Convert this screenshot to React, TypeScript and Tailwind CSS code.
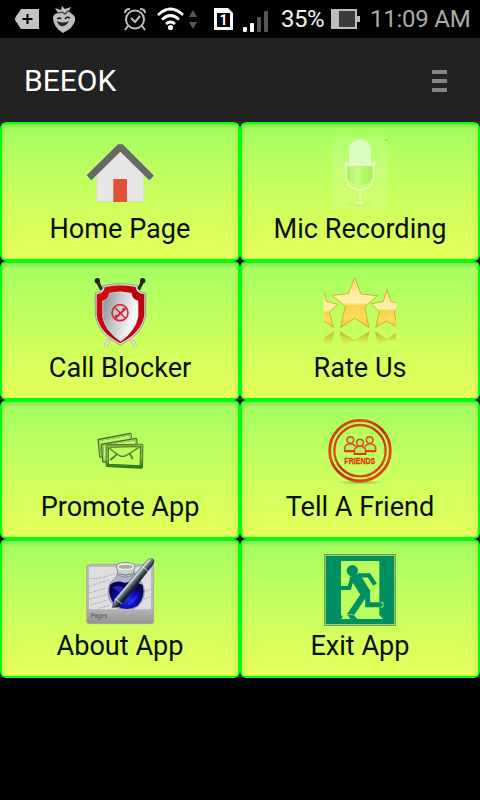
import type { ReactNode } from 'react';

function HomeIcon() {
  return (
    <svg className="block size-[72px]" viewBox="42 21 216 216">
      <path d="M80 215V128L151 62l70 66v87z" fill="#e6e6e4" stroke="#cfe0b0" strokeWidth="2" />
      <path d="M50 136L144 43h14l94 94-14 14-87-86-87 86z" fill="#686868" />
      <path d="M130 147h41v69h-41z" fill="#df5035" />
    </svg>
  );
}

function MicIcon() {
  return (
    <svg className="block size-[72px]" viewBox="42 21 216 216">
      <defs>
        <linearGradient id="micBack" x1="0" y1="0" x2="0" y2="1">
          <stop offset="0" stopColor="#fff" stopOpacity=".09" />
          <stop offset=".5" stopColor="#fff" stopOpacity=".15" />
          <stop offset="1" stopColor="#fff" stopOpacity=".09" />
        </linearGradient>
        <pattern id="mesh" width="6" height="6" patternUnits="userSpaceOnUse">
          <rect width="6" height="6" fill="#e1ffc9" />
          <circle cx="1.5" cy="1.5" r="1.1" fill="#b5f77c" />
          <circle cx="4.5" cy="4.5" r="1.1" fill="#b5f77c" />
        </pattern>
        <linearGradient id="micBody">
          <stop offset="0" stopColor="#a2f65b" />
          <stop offset=".4" stopColor="#cdfc8d" />
          <stop offset=".6" stopColor="#b2f967" />
          <stop offset="1" stopColor="#a6f55c" />
        </linearGradient>
      </defs>
      <rect x="66" y="22" width="168" height="213" fill="url(#micBack)" />
      <ellipse cx="149" cy="224" rx="40" ry="7" fill="#c4f26a" opacity=".35" />
      <path d="M117 98V60q2-30 33-32 31 2 33 32v38z" fill="url(#mesh)" />
      <path d="M112 106h76v33q-4 24-38 28-34-4-38-28z" fill="url(#micBody)" />
      <path d="M107 108v30q3 39 43 42 38-3 41-42v-30M151 180v38" fill="none" stroke="#e6ffb9" strokeWidth="5" />
      <path d="M103 96h9v3h77v-3h9v11H103z" fill="#edffcf" />
      <rect x="136" y="216" width="26" height="6" rx="3" fill="#e6ffb9" />
      <path d="M221 28l12 1v5l-6-3z" fill="#8bc862" />
    </svg>
  );
}

function ShieldIcon() {
  return (
    <svg className="block size-[72px]" viewBox="42 18 216 216">
      <defs>
        <linearGradient id="steel" x1="0" y1="0" x2="1" y2=".35">
          <stop offset="0" stopColor="#858a91" />
          <stop offset=".5" stopColor="#c9cbd0" />
          <stop offset="1" stopColor="#fff" />
        </linearGradient>
        <linearGradient id="shieldRed" x1="0" y1="0" x2="1" y2="1">
          <stop offset="0" stopColor="#d9131f" />
          <stop offset=".5" stopColor="#b5000c" />
          <stop offset="1" stopColor="#cb0a16" />
        </linearGradient>
      </defs>
      <path d="M118 208l-13 22M184 208l13 22" stroke="#a3a998" strokeWidth="9" />
      <path d="M118 208l-13 22M184 208l13 22" stroke="#f0f3e6" strokeWidth="5" />
      <path d="M82 34l13 25M218 34l-13 25" stroke="#263022" strokeWidth="10" />
      <circle cx="82" cy="32" r="8" fill="#192119" /><circle cx="218" cy="32" r="8" fill="#192119" />
      <path d="M100 47q51-12 101 0 2 21 26 22v68q-9 57-76 88-67-32-75-88V69q22-1 24-22z" fill="#e3e4df" stroke="#737a70" strokeWidth="2" />
      <path d="M104 51q47-10 93 0 2 20 26 22v63q-8 52-72 84-64-33-71-84V73q22-3 24-22z" fill="url(#shieldRed)" />
      <path d="M118 70q33-9 66 0 1 18 20 23v48q-9 42-52 73-46-31-54-73V93q19-4 20-23z" fill="url(#steel)" stroke="#e9e9e9" strokeWidth="2" />
      <circle cx="150" cy="128" r="24" fill="none" stroke="#d82330" strokeWidth="5" />
      <path d="M132 110l36 36" stroke="#d82330" strokeWidth="4" />
      <path d="M135 144q-3-11 6-9l16-14q-2-10 9-7l2 5-7 6-24 23z" fill="#d82330" />
    </svg>
  );
}

const STAR = 'M134 23l19 49 49 5-38 33 13 63-43-29-42 29 14-64-40-33 49-5z';

function StarsIcon() {
  return (
    <svg className="block size-[72px]" viewBox="42 18 216 216">
      <defs>
        <linearGradient id="gold" x1="0" y1="0" x2="0" y2="1">
          <stop offset="0" stopColor="#fbdc60" />
          <stop offset=".3" stopColor="#ffeb9a" />
          <stop offset=".5" stopColor="#fff1ac" />
          <stop offset=".56" stopColor="#fad34b" />
          <stop offset=".8" stopColor="#ffdf5c" />
          <stop offset="1" stopColor="#f2c237" />
        </linearGradient>
        <linearGradient id="fade" gradientUnits="userSpaceOnUse" x1="0" y1="185" x2="0" y2="234">
          <stop offset="0" stopColor="#b5ab28" stopOpacity=".85" />
          <stop offset=".45" stopColor="#cdd442" stopOpacity=".7" />
          <stop offset="1" stopColor="#d9ff5b" stopOpacity="0" />
        </linearGradient>
      </defs>
      <g fill="url(#gold)" stroke="#d2a02c" strokeWidth="2.5" strokeLinejoin="round">
        <path d="M10 94l23-2 9-26 8 28 33 9-25 23 12 46-28-19-29 19z" />
        <path d="M231 59l12 36 35 7-26 23 10 47-31-19-34 19 11-47-24-24 35-6z" />
        <path d={STAR} />
      </g>
      <path d="M42 205l30-20-9 43-21-9zM89 184l45 28 45-28-9 44-36-16-36 16zM195 184l36 25 27-20v22l-27-2-26 17z" fill="url(#fade)" />
      <path d="M42 205l30-20M89 184l45 28 45-28M195 184l36 25 27-20" fill="none" stroke="#aeb03f" strokeWidth="2" opacity=".6" />
    </svg>
  );
}

function MailIcon() {
  return (
    <svg className="block size-[72px]" viewBox="42 15 216 216">
      <defs>
        <linearGradient id="mail" x1="0" y1="0" x2="0" y2="1">
          <stop offset="0" stopColor="#86ad42" />
          <stop offset=".6" stopColor="#82c144" />
          <stop offset="1" stopColor="#21841e" />
        </linearGradient>
      </defs>
      <g fill="none" strokeLinejoin="round">
        <path d="M98 140h-7l-5-50 95-18 2 12M107 155h-7l-4-51 102-17 2 14" stroke="#48682f" strokeWidth="7" />
        <path d="M97 138h-5l-4-46 93-18 1 10M106 153h-4l-4-47 99-17 1 11" stroke="#a9d569" strokeWidth="3.5" />
        <path d="M112 108l103-2-1 65-102-5z" stroke="#385d26" strokeWidth="10" />
        <path d="M112 108l103-2-1 65-102-5z" stroke="url(#mail)" strokeWidth="6" />
        <path d="M115 111q25 23 37 27 9 2 17-2l41-26M140 134l-19 16M180 132l8 15" stroke="#507330" strokeWidth="5" />
        <path d="M115 109q25 23 38 27 9 2 16-2l40-25" stroke="#b2d95f" strokeWidth="2" />
      </g>
    </svg>
  );
}

function FriendsIcon() {
  return (
    <svg className="block size-[72px]" viewBox="42 15 216 216">
      <defs>
        <linearGradient id="ring" x1="0" y1="0" x2="1" y2="1">
          <stop offset="0" stopColor="#cf2c08" />
          <stop offset=".3" stopColor="#e05114" />
          <stop offset=".5" stopColor="#bd3003" />
          <stop offset=".8" stopColor="#e34b16" />
          <stop offset="1" stopColor="#c22602" />
        </linearGradient>
        <radialGradient id="ringShadow">
          <stop offset="0" stopColor="#6f9a40" stopOpacity=".8" />
          <stop offset="1" stopColor="#93b54a" stopOpacity="0" />
        </radialGradient>
      </defs>
      <ellipse cx="150" cy="217" rx="76" ry="7" fill="url(#ringShadow)" />
      <circle cx="150" cy="122" r="91" fill="none" stroke="url(#ring)" strokeWidth="8.5" />
      <circle cx="150" cy="122" r="77" fill="none" stroke="url(#ring)" strokeWidth="7" />
      <g fill="#b6ee60" stroke="#d5521b" strokeWidth="4.5">
        <path d="M104 124v-11q2-11 17-12 14 1 17 11v12zM164 124v-12q3-10 15-11 16 1 18 12v11z" />
        <circle cx="121" cy="90" r="10" /><circle cx="179" cy="90" r="10" />
        <path d="M133 133v-12q3-12 17-12t17 12v12z" />
        <circle cx="150" cy="98" r="10" />
      </g>
      <path d="M103 124h31M166 124h31M132 132h36" stroke="#dd3910" strokeWidth="6" />
      <text x="103" y="161" textLength="93" lengthAdjust="spacingAndGlyphs" fontSize="28" fontWeight="700" fill="#dc3208" stroke="#dc3208" strokeWidth=".8" fontFamily="Liberation Sans, sans-serif">FRIENDS</text>
    </svg>
  );
}

function PagesIcon() {
  return (
    <svg className="block size-[72px]" viewBox="42 18 216 216">
      <defs>
        <linearGradient id="plate" x1="0" y1="0" x2="0" y2="1">
          <stop offset="0" stopColor="#bbb" />
          <stop offset=".75" stopColor="#b5b5b5" />
          <stop offset="1" stopColor="#939393" />
        </linearGradient>
        <linearGradient id="pen" gradientUnits="userSpaceOnUse" x1="176" y1="94" x2="197" y2="112">
          <stop offset="0" stopColor="#222b35" />
          <stop offset=".3" stopColor="#e5edf2" />
          <stop offset=".55" stopColor="#677682" />
          <stop offset="1" stopColor="#141b26" />
        </linearGradient>
        <radialGradient id="ink" cy=".65">
          <stop offset="0" stopColor="#262fff" />
          <stop offset=".65" stopColor="#0e0cb5" />
          <stop offset="1" stopColor="#080455" />
        </radialGradient>
      </defs>
      <rect x="50" y="49" width="201" height="178" rx="8" fill="url(#plate)" stroke="#9aa090" strokeWidth="2" />
      <path d="M57 57h186v127H57z" fill="#dedee0" />
      <g fill="none" stroke="#b0afb6" strokeWidth="3" strokeDasharray="7 2 3 2 10 4">
        <path d="M59 92q36 2 76-17M58 115l59-20M58 135l54-16M58 153l58-14M60 171l57-16M84 181l36-9M219 133l22-9M221 153l20-7" />
      </g>
      <path d="M142 76q-1 12-11 18-16 14-17 36 1 39 34 52h42q32-13 33-53-2-24-22-40l-8-17z" fill="#b0b3c8" stroke="#707490" strokeWidth="2" />
      <path d="M119 112q19-18 45-7 26-12 54 6 9 36-15 62-33 20-66 0-25-26-18-61z" fill="url(#ink)" />
      <path d="M126 119q14-11 35 1l-10 16q-15-14-25-17zM175 155q20-2 29-21-4 29-29 37z" fill="#3038f0" opacity=".65" />
      <path d="M139 57q0-13 28-14 28 1 28 14l-6 24q-22 12-44 0z" fill="#c9cfcc" stroke="#777f7c" strokeWidth="2.5" />
      <ellipse cx="167" cy="56" rx="23" ry="8" fill="#a6ad9f" stroke="#eef0ee" strokeWidth="4" />
      <path d="M148 77q20 9 39 0" fill="none" stroke="#777" strokeWidth="3" />
      <path d="M127 178l7-24 93-112q12-14 22-9 7 6-1 18l-91 116q-15 14-30 11z" fill="url(#pen)" stroke="#232c36" strokeWidth="1.5" />
      <path d="M217 55l17 15M137 153l19 15" stroke="#e0e0e0" strokeWidth="2.5" />
      <text x="62" y="210" fontSize="19" textLength="50" lengthAdjust="spacingAndGlyphs" fontWeight="700" fontFamily="Liberation Sans, sans-serif" fill="#686868">Pages</text>
    </svg>
  );
}

function ExitIcon() {
  return (
    <svg className="block size-[72px]" viewBox="42 18 216 216">
      <path d="M42 18h216v216H42z" fill="#67783c" />
      <path d="M44 20h212v212H44z" fill="#c1ed75" />
      <path d="M47 23h206v206H47z" fill="#008f61" />
      <path d="M93 39h115v161l11 13H104l-11-13z" fill="#baff60" />
      <circle cx="127" cy="68" r="17" fill="#008f61" />
      <path d="M118 87l30-11 31 50v18l-24 3z" fill="#008f61" />
      <g fill="none" stroke="#008f61">
        <path d="M145 82h32l18 28" strokeWidth="13" />
        <path d="M127 88l-9 32H92" strokeWidth="12" />
        <path d="M162 140l-43 64" strokeWidth="19" />
        <path d="M173 125v45h46" strokeWidth="15" />
      </g>
      <path d="M112 200h18l12 13h-21z" fill="#008f61" />
      <path d="M113 200h17" stroke="#baff60" strokeWidth="2" />
      <path d="M93 213l11-13 12 13z" fill="#baff60" />
      <path d="M212 163h7v14h-7" fill="none" stroke="#baff60" strokeWidth="2.500" />
    </svg>
  );
}

function Tile({ label, children }: { label: string; children: ReactNode }) {
  return (
    <button className="flex h-[139px] w-[240px] flex-col items-center rounded-[6px] border-2 border-[#00ff0a] bg-linear-to-b from-[#a2ff60] to-[#e7ff5b] pt-[13px] text-[27.1px] leading-8 whitespace-nowrap text-[#081000] shadow-[inset_0_2px_4px_rgba(60,90,30,0.25)]">
      {children}
      <span className="mt-1">{label}</span>
    </button>
  );
}

function StatusBar() {
  return (
    <div className="flex h-[38px] items-center bg-black whitespace-nowrap">
      <svg className="ml-[15px] h-5 w-6" viewBox="0 0 24 20">
        <path d="M6 0h18v20H6L0 11V9z" fill="#c3c3c3" /><path d="M12.5 5v10M7.5 10h10" stroke="#000" strokeWidth="2" />
      </svg>
      <svg className="ml-[13px] h-[28px] w-[24px]" viewBox="0 0 24 28">
        <path d="M1 13Q1 9 6 8L3 3l6 2 1-4 3 3 6-2-2 4 3 3q4 2 3 7-2 7-12 12Q1 22 1 13z" fill="#bebebe" />
        <path d="M6 8l4-1 3 2 3-3 4 2" fill="none" stroke="#333" strokeWidth="1.1" />
        <path d="M5 14q3-2 4 0M13 14q2-3 5-1" fill="none" stroke="#111" strokeWidth="1.4" />
        <path d="M5 16q6 3 12 0-3 6-8 5-3-1-4-5z" fill="#222" />
      </svg>
      <svg className="ml-[47px] h-6 w-6" viewBox="0 0 24 24" fill="none" stroke="#bdbdbd" strokeWidth="2">
        <circle cx="12" cy="12.5" r="9" /><path d="M2 6q0-4 5-4M22 6q0-4-5-4M5 19l-3 4M19 19l3 4" /><path d="M8 11l4 4 5-6" />
      </svg>
      <svg className="ml-[10px] h-6 w-[28px]" viewBox="0 0 28 24" fill="none" stroke="#fff" strokeWidth="2.7">
        <path d="M1 8q12.500-12 25 0M5 12.500q8.500-8 17 0M9 17q4.500-4 9 0" /><circle cx="13.5" cy="20.5" r="2.6" fill="#fff" stroke="none" />
      </svg>
      <svg className="ml-[4px] h-[19px] w-2" viewBox="0 0 8 19"><path d="M0 7l4-7 4 7zM0 12h8l-4 7z" fill="#565656" /></svg>
      <svg className="ml-[17px] h-6 w-[19px]" viewBox="0 0 19 24">
        <path d="M1 1h13l5 5v17H0V1z" fill="#fff" /><path d="M3 6h13v14H3z" fill="#000" />
        <text x="9.5" y="18" textAnchor="middle" fontSize="14" fontWeight="700" fill="#fff" fontFamily="Roboto, sans-serif">1</text>
      </svg>
      <svg className="mt-[4px] ml-[10px] h-[22px] w-[25px]" viewBox="0 0 25 22">
        <rect y="17" width="4" height="5" rx="1" fill="#fff" /><rect x="7" y="13" width="4" height="9" rx="1" fill="#fff" />
        <rect x="14" y="7" width="4" height="15" rx="1" fill="#555" /><rect x="21" y="1" width="4" height="21" rx="1" fill="#555" />
      </svg>
      <span className="ml-[13px] w-[44px] text-[24px] leading-7 tracking-[-0.5px] text-[#f4f4f4]">35%</span>
      <svg className="ml-[6px] h-5 w-[29px]" viewBox="0 0 29 20">
        <path d="M0 0h26v7h3v6h-3v7H0z" fill="#bcbcbc" /><path d="M8 2h16v16H8z" fill="#3b3b3b" />
      </svg>
      <span className="ml-[10px] text-[24px] leading-7 tracking-[-0.25px] text-[#aaa]">11:09 AM</span>
    </div>
  );
}

export default function App() {
  return (
    <main className="h-[800px] w-[480px] overflow-hidden bg-black font-['Roboto',sans-serif]">
      <StatusBar />
      <header className="flex h-[84px] items-center justify-between bg-[#222] pr-[33px] pl-[24px]">
        <h1 className="pt-[2px] text-[30px] leading-9 text-white">BEEOK</h1>
        <div className="mt-[2px] flex w-[15px] flex-col gap-[5px]">
          <i className="h-1 bg-[#858585]" /><i className="h-1 bg-[#858585]" /><i className="h-1 bg-[#858585]" />
        </div>
      </header>
      <section className="grid grid-cols-2">
        <Tile label="Home Page"><HomeIcon /></Tile>
        <Tile label="Mic Recording"><MicIcon /></Tile>
        <Tile label="Call Blocker"><ShieldIcon /></Tile>
        <Tile label="Rate Us"><StarsIcon /></Tile>
        <Tile label="Promote App"><MailIcon /></Tile>
        <Tile label="Tell A Friend"><FriendsIcon /></Tile>
        <Tile label="About App"><PagesIcon /></Tile>
        <Tile label="Exit App"><ExitIcon /></Tile>
      </section>
    </main>
  );
}
